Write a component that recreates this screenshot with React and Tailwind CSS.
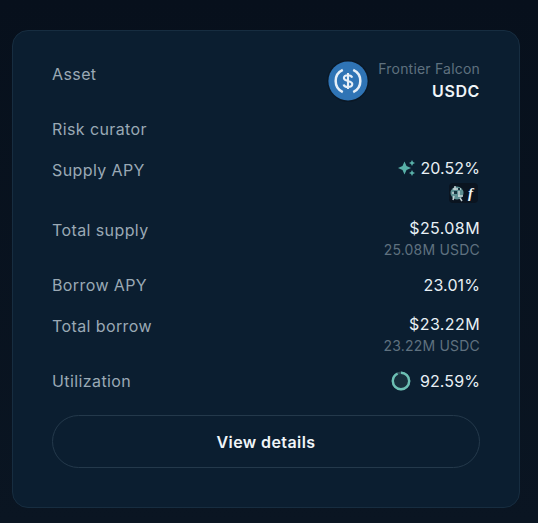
const rowLabel = 'text-[16px] leading-[24px] text-[#9aa9b5] tracking-[0.4px]';
const value = 'text-[16px] leading-[24px] text-[#e8f0f5] tracking-[0.4px]';
const percent = 'text-[16px] leading-[24px] text-[#e8f0f5] tracking-[0.1px]';
const sub = 'text-[14px] leading-[20px] text-[#5f717f] tracking-[0.2px]';

const UsdcIcon = () => (
  <svg width="42" height="42" viewBox="0 0 42 42">
    <circle cx="21" cy="21" r="21" fill="#0a1826" />
    <circle cx="21" cy="21" r="19.6" fill="#2f74b5" />
    <path d="M15.8 9.9a12.2 12.2 0 0 0 0 22.200M26.200 9.9a12.2 12.2 0 0 1 0 22.200" fill="none" stroke="#e6eff7" strokeWidth="2.5" />
    <path d="M25.200 17.600c-.5-1.600-2.100-2.400-4.200-2.400-2.400 0-4.100 1.100-4.100 2.800 0 4 8.400 2 8.400 6.100 0 1.900-1.800 2.900-4.300 2.900-2.300 0-4-.9-4.400-2.600M21 13v16" fill="none" stroke="#e6eff7" strokeWidth="2.100" />
  </svg>
);

const Sparkle = () => (
  <svg width="18" height="18" viewBox="0 0 18 18" fill="#58b0a8">
    <path d="M6.5 2.500 8.500 7 13 9 8.500 11 6.500 15.500 4.500 11 0 9 4.500 7Z" />
    <path d="M14 1 15 3 17 4 15 5 14 7 13 5 11 4 13 3Z" />
    <path d="M14 11 15 13 17 14 15 15 14 17 13 15 11 14 13 13Z" />
  </svg>
);

const CuratorBadge = () => (
  <div className="flex h-[20px] w-[29px] items-center rounded-[4px] bg-[#0a1420]">
    <svg width="16" height="18" viewBox="0 0 16 18">
      <circle cx="8" cy="9" r="6.500" fill="#5d8f92" />
      <path d="M4 5h8M3 9h5M9 12h5M6 2v4M10 7v6M5 12l-1 4M11 14l2 3" stroke="#c4d2d4" strokeWidth="1.500" fill="none" />
      <path d="M5 7h3v3H5zM9 4h2v2H9z" fill="#16323d" />
    </svg>
    <span className="ml-[3px] font-['Liberation_Serif',serif] text-[15px] font-bold italic leading-[18px] text-[#f2f5f7]">f</span>
  </div>
);

const Ring = () => (
  <svg width="20" height="20" viewBox="0 0 20 20">
    <circle cx="10" cy="10" r="8.200" fill="#17303d" stroke="#33505a" strokeWidth="2.400" />
    <circle
      cx="10"
      cy="10"
      r="8.200"
      fill="none"
      stroke="#6cc0b4"
      strokeWidth="2.400"
      strokeDasharray="47.700 51.500"
      transform="rotate(-90 10 10)"
    />
  </svg>
);

const Row = ({ label, className, labelClass, children }) => (
  <div className={`flex items-start justify-between ${className}`}>
    <span className={`${rowLabel} ${labelClass}`}>{label}</span>
    <div className="flex flex-col items-end">{children}</div>
  </div>
);

export default function App() {
  return (
    <div className="h-[523px] w-[538px] overflow-hidden bg-gradient-to-b from-[#07101c] to-[#0a1522] pl-[12px] pt-[30px] font-['Inter',sans-serif]">
      <div className="flex h-[478px] w-[508px] flex-col rounded-[16px] border border-[#172d40] bg-[#0b1e30] pl-[39px] pr-[39px] pt-[28px]">
        <div className="flex h-[44px] items-start justify-between">
          <span className={`${rowLabel} mt-[3px]`}>Asset</span>
          <div className="flex items-center gap-[9px]">
            <UsdcIcon />
            <div className="flex flex-col items-end">
              <span className="text-[14px] leading-[20px] tracking-[0.2px] text-[#5f717f]">Frontier Falcon</span>
              <span className="mt-[1px] text-[16px] font-semibold leading-[22px] tracking-[0.6px] text-[#f0f5f8]">USDC</span>
            </div>
          </div>
        </div>
        <Row label="Risk curator" className="mt-[14px] h-[24px]" />
        <div className="mt-[15px] flex items-start justify-between">
          <span className={`${rowLabel} mt-[2px]`}>Supply APY</span>
          <div className="flex flex-col items-end">
            <div className="flex items-center gap-[4px]">
              <Sparkle />
              <span className={percent}>20.52%</span>
            </div>
            <div className="mt-[3px] mr-[2px]">
              <CuratorBadge />
            </div>
          </div>
        </div>
        <Row label="Total supply" labelClass="mt-[2px]" className="mt-[13px]">
          <span className={value}>$25.08M</span>
          <span className={sub}>25.08M USDC</span>
        </Row>
        <Row label="Borrow APY" className="mt-[13px]">
          <span className={percent}>23.01%</span>
        </Row>
        <Row label="Total borrow" labelClass="mt-[2px]" className="mt-[15px]">
          <span className={value}>$23.22M</span>
          <span className={sub}>23.22M USDC</span>
        </Row>
        <div className="mt-[13px] flex items-center justify-between">
          <span className={rowLabel}>Utilization</span>
          <div className="flex items-center gap-[9px]">
            <Ring />
            <span className={percent}>92.59%</span>
          </div>
        </div>
        <button className="mt-[22px] h-[53px] w-full rounded-full border border-[#24394b] text-[16px] font-semibold tracking-[0.4px] text-[#f0f5f8]">
          View details
        </button>
      </div>
    </div>
  );
}
